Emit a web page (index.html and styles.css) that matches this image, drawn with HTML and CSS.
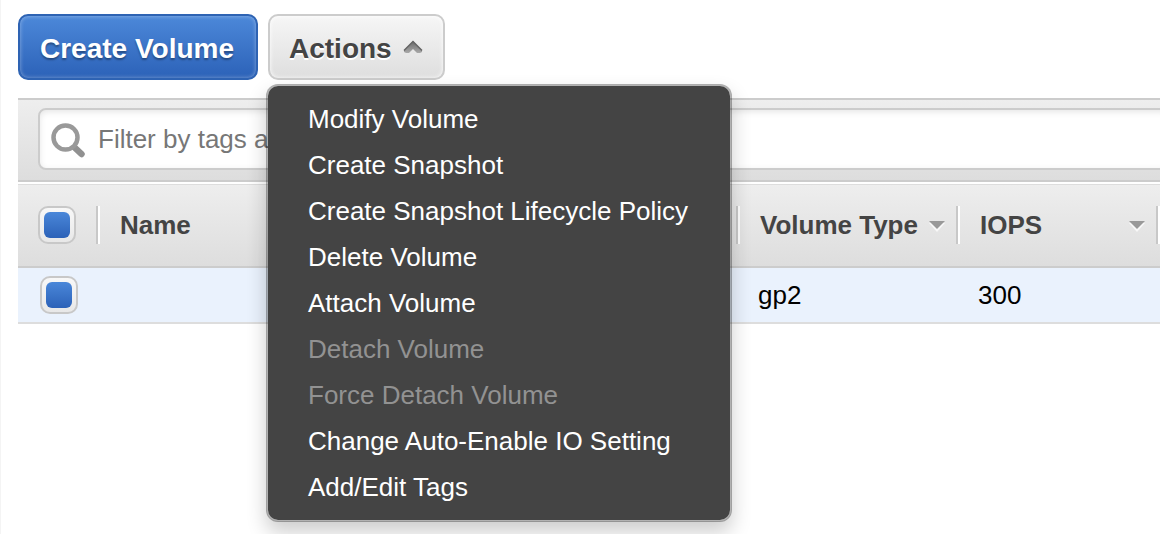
FILE: index.html
```html
<!DOCTYPE html>
<html lang="en">
<head>
<meta charset="utf-8">
<meta name="viewport" content="width=device-width, initial-scale=1">
<title>Volumes</title>
<link rel="stylesheet" href="styles.css">
</head>
<body>
<main class="page">
  <div class="toolbar">
    <button class="btn btn-primary" type="button">Create Volume</button>
    <div class="dropdown">
      <button class="btn btn-default" type="button" aria-haspopup="menu" aria-expanded="true">Actions
        <svg class="caret" viewBox="0 0 20 14" aria-hidden="true">
          <defs><linearGradient id="caret-fill" x1="0" y1="0" x2="0" y2="1"><stop offset="0" stop-color="#666"/><stop offset="0.500" stop-color="#888"/><stop offset="1" stop-color="#aaa"/></linearGradient></defs>
          <path d="M10 1 19 10V12L17 13H14L10 9 6 13H3L1 12V10Z" fill="url(#caret-fill)"/>
          <path d="M1 10.500 10 1.500 19 10.500" fill="none" stroke="#666" stroke-width="1.500"/>
        </svg>
      </button>
      <div class="menu" role="menu">
        <button class="menu-item" role="menuitem" type="button">Modify Volume</button>
        <button class="menu-item" role="menuitem" type="button">Create Snapshot</button>
        <button class="menu-item" role="menuitem" type="button">Create Snapshot Lifecycle Policy</button>
        <button class="menu-item" role="menuitem" type="button">Delete Volume</button>
        <button class="menu-item" role="menuitem" type="button">Attach Volume</button>
        <button class="menu-item" role="menuitem" type="button" disabled>Detach Volume</button>
        <button class="menu-item" role="menuitem" type="button" disabled>Force Detach Volume</button>
        <button class="menu-item" role="menuitem" type="button">Change Auto-Enable IO Setting</button>
        <button class="menu-item" role="menuitem" type="button">Add/Edit Tags</button>
      </div>
    </div>
  </div>

  <div class="filter-bar">
    <label class="search">
      <svg class="search-icon" viewBox="0 0 36 36" aria-hidden="true">
        <path d="M23 23 31.500 31" stroke="#919191" stroke-width="6.500" stroke-linecap="round"/>
        <circle cx="15.500" cy="14.500" r="12" fill="#fff" stroke="#999" stroke-width="4.500"/>
      </svg>
      <input class="search-input" type="text" placeholder="Filter by tags a" aria-label="Filter volumes">
    </label>
  </div>

  <table class="volumes">
    <colgroup><col class="col-check"><col><col class="col-type"><col class="col-iops"><col class="col-rest"></colgroup>
    <thead>
      <tr>
        <th class="check-cell"><input class="check" type="checkbox" checked aria-label="Select all volumes"></th>
        <th scope="col"><div class="head">Name</div></th>
        <th scope="col"><div class="head">Volume Type <svg class="sort" viewBox="0 0 16 11" aria-hidden="true"><path d="M0 2H16L8 11Z" fill="#f8f8f8"/><path d="M0 0H16L8 8Z" fill="#999"/></svg></div></th>
        <th scope="col"><div class="head">IOPS <svg class="sort" viewBox="0 0 16 11" aria-hidden="true"><path d="M0 2H16L8 11Z" fill="#f8f8f8"/><path d="M0 0H16L8 8Z" fill="#999"/></svg></div></th>
        <th><div class="head head-rest"></div></th>
      </tr>
    </thead>
    <tbody>
      <tr>
        <td class="check-cell"><input class="check" type="checkbox" checked aria-label="Select volume"></td>
        <td></td>
        <td>gp2</td>
        <td>300</td>
        <td></td>
      </tr>
    </tbody>
  </table>
</main>
</body>
</html>
```

FILE: styles.css
```css
* {
  box-sizing: border-box;
}

body {
  margin: 0;
  min-height: 100vh;
  border-left: 1px solid #f4f4f4;
  background: #fff;
  color: #000;
  font-family: "Liberation Sans", Arial, sans-serif;
  font-size: 26px;
  line-height: 30px;
  overflow: hidden;
}

button,
input {
  font: inherit;
}

.page {
  padding: 14px 0 0 17px;
}

.toolbar {
  display: flex;
  gap: 10px;
  margin-bottom: 18px;
}

.btn {
  display: flex;
  align-items: center;
  gap: 11px;
  height: 66px;
  padding: 3px 22px 0 20px;
  border: 2px solid #ccc;
  border-radius: 10px;
  font-size: 28px;
  font-weight: bold;
  white-space: nowrap;
}

.btn-primary {
  border-color: #2e63b3;
  background: linear-gradient(#4c88d9, #2c62b8);
  box-shadow: inset 0 0 4px rgba(255, 255, 255, 0.4);
  color: #fff;
  text-shadow: 0 2px 2px rgba(0, 0, 0, 0.35);
}

.btn-default {
  padding: 3px 20px 0 19px;
  background: linear-gradient(#f6f6f6, #dedede);
  box-shadow: inset 0 0 4px #fff;
  color: #444;
  text-shadow: 0 2px 0 #fff;
}

.caret {
  width: 20px;
  height: 14px;
  margin-bottom: 4px;
}

.dropdown {
  position: relative;
}

.menu {
  position: absolute;
  top: 70px;
  left: -2px;
  z-index: 1;
  display: flex;
  flex-direction: column;
  width: max-content;
  padding: 10px 0;
  border: 2px solid rgba(0, 0, 0, 0.3);
  border-radius: 12px;
  background: #444;
  background-clip: padding-box;
  box-shadow: 0 10px 20px rgba(0, 0, 0, 0.2);
}

.menu-item {
  height: 46px;
  padding: 0 42px 0 40px;
  border: 0;
  background: none;
  color: #fff;
  text-align: left;
}

.menu-item:disabled {
  color: #929292;
}

.filter-bar {
  padding: 8px 0 10px 20px;
  border-top: 2px solid #ccc;
  border-bottom: 2px solid #ccc;
  background: linear-gradient(#eee, #ddd);
}

.search {
  display: flex;
  align-items: center;
  gap: 12px;
  height: 62px;
  margin-right: -10px;
  padding-left: 10px;
  border: 2px solid #ccc;
  border-radius: 8px;
  background: #fff;
  box-shadow: inset 0 2px 6px rgba(0, 0, 0, 0.1);
}

.search-icon {
  flex: none;
  width: 36px;
  height: 36px;
  margin-top: 4px;
}

.search-input {
  flex: 1;
  min-width: 0;
  padding: 0;
  border: 0;
  outline: 0;
  background: none;
}

.search-input::placeholder {
  color: #777;
}

.volumes {
  width: 100%;
  margin-top: 2px;
  border-collapse: separate;
  border-spacing: 0;
  table-layout: fixed;
}

.col-check {
  width: 78px;
}

.col-type {
  width: 220px;
}

.col-iops {
  width: 200px;
}

.col-rest {
  width: 4px;
}

.volumes thead {
  background: linear-gradient(#eee, #ddd);
}

.volumes th {
  height: 84px;
  padding: 0 0 2px;
  border-top: 1px solid #ddd;
  border-bottom: 2px solid #ccc;
  color: #444;
  text-align: left;
}

.volumes td {
  height: 56px;
  padding: 0 22px;
  border-bottom: 2px solid #ddd;
  background: #eaf2fd;
}

.volumes td:last-child {
  padding: 0;
}

.volumes th.check-cell {
  padding-left: 20px;
}

.volumes td.check-cell {
  padding: 0 0 0 22px;
}

.head {
  display: flex;
  align-items: center;
  justify-content: space-between;
  height: 38px;
  padding: 0 11px 0 22px;
  border-left: 2px solid #c8c8c8;
  box-shadow: inset 2px 0 #fff;
  white-space: nowrap;
}

.head-rest {
  padding: 0;
}

.sort {
  width: 16px;
  height: 11px;
  margin-top: 4px;
}

.check {
  display: grid;
  place-items: center;
  width: 38px;
  height: 38px;
  margin: 0;
  border: 2px solid #c8c8c8;
  border-radius: 10px;
  background: linear-gradient(#f8f8f8, #e8e8e8);
  appearance: none;
}

.check:checked::before {
  content: "";
  width: 26px;
  height: 26px;
  border-radius: 6px;
  background: linear-gradient(#4a87d9, #2c62b8);
}
```
